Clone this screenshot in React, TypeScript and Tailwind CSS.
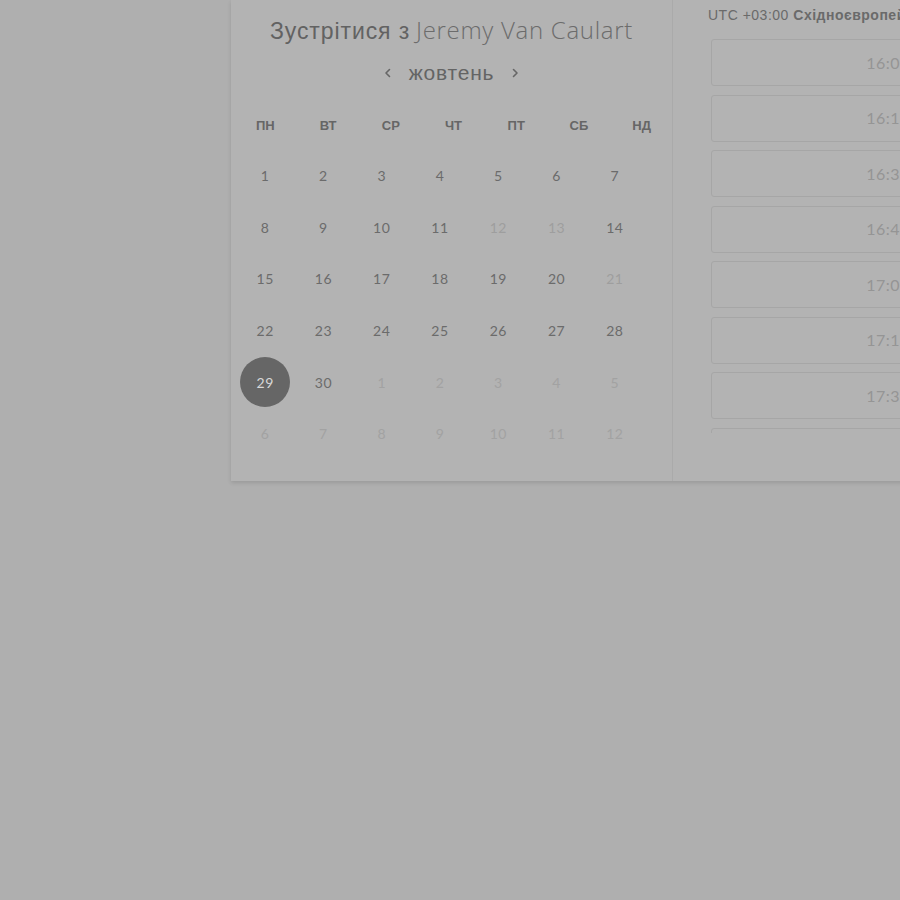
const WEEKDAYS = ['ПН', 'ВТ', 'СР', 'ЧТ', 'ПТ', 'СБ', 'НД']

type Day = { n: number; muted?: boolean; faded?: boolean; selected?: boolean }

const DAYS: Day[] = [
  ...[1, 2, 3, 4, 5, 6, 7].map((n) => ({ n })),
  { n: 8 }, { n: 9 }, { n: 10 }, { n: 11 }, { n: 12, muted: true }, { n: 13, muted: true }, { n: 14 },
  { n: 15 }, { n: 16 }, { n: 17 }, { n: 18 }, { n: 19 }, { n: 20 }, { n: 21, muted: true },
  ...[22, 23, 24, 25, 26, 27, 28].map((n) => ({ n })),
  { n: 29, selected: true }, { n: 30 },
  ...[1, 2, 3, 4, 5].map((n) => ({ n, faded: true })),
  ...[6, 7, 8, 9, 10, 11, 12].map((n) => ({ n, faded: true })),
]

const SLOTS = ['16:00', '16:15', '16:30', '16:45', '17:00', '17:15', '17:30', '17:45']

const FONT = { fontFamily: "Lato, 'Liberation Sans', sans-serif" }

function Chevron({ dir }: { dir: 'left' | 'right' }) {
  return (
    <svg width="8" height="10" viewBox="0 0 8 10" fill="none">
      <path
        d={dir === 'left' ? 'M5.5 1.5 2 5l3.5 3.5' : 'M2.5 1.5 6 5 2.5 8.5'}
        stroke="#666"
        strokeWidth="1.6"
        strokeLinecap="round"
        strokeLinejoin="round"
      />
    </svg>
  )
}

export default function App() {
  return (
    <div className="w-[900px] h-[900px] overflow-hidden bg-[#afafaf]" style={FONT}>
      <div className="ml-[231px] w-[900px] h-[481px] flex bg-[#b3b3b3] shadow-[0_2px_4px_rgba(0,0,0,0.12)]">
        {/* calendar */}
        <div className="w-[441px] shrink-0 pt-[15px] flex flex-col">
          <div className="h-[30px] leading-[30px] text-center text-[23px] text-[#626262] whitespace-nowrap">
            <span className="font-['Liberation_Sans',sans-serif] tracking-[0.9px]">Зустрітися з</span>{' '}
            <span className="font-['Open_Sans',sans-serif] font-light text-[#6c6c6c] text-[24px] tracking-[0.7px]">Jeremy Van Caulart</span>
          </div>

          <div className="mt-[15px] h-[26px] flex items-center justify-center gap-[17px]">
            <Chevron dir="left" />
            <span className="text-[21px] text-[#646464] font-['Liberation_Sans',sans-serif] tracking-[0.8px]">жовтень</span>
            <Chevron dir="right" />
          </div>

          <div className="mt-[30px] ml-[3px] w-[439px] h-[20px] grid grid-cols-7 items-center">
            {WEEKDAYS.map((d) => (
              <div
                key={d}
                className="text-center text-[13px] font-bold text-[#666] font-['Liberation_Sans',sans-serif]"
              >
                {d}
              </div>
            ))}
          </div>

          <div className="mt-[14px] ml-[5px] w-[408px] grid grid-cols-7 auto-rows-[51.6px]">
            {DAYS.map((d, i) => (
              <div key={i} className="flex items-center justify-center">
                {d.selected ? (
                  <div className="w-[50px] h-[50px] rounded-full bg-[#666] flex items-center justify-center text-[14px] text-[#d8d8d8] tracking-[0.5px]">
                    {d.n}
                  </div>
                ) : (
                  <span
                    className={
                      'text-[14px] tracking-[0.5px] ' +
                      (d.faded ? 'text-[#a2a2a2]' : d.muted ? 'text-[#9e9e9e]' : 'text-[#6b6b6b]')
                    }
                  >
                    {d.n}
                  </span>
                )}
              </div>
            ))}
          </div>
        </div>

        {/* time slots */}
        <div className="flex-1 border-l border-[#aaaaaa] pl-[38px] flex flex-col">
          <div className="h-[30px] leading-[30px] -ml-[3px] text-[14px] tracking-[0.5px] text-[#6a6a6a] whitespace-nowrap font-['Liberation_Sans',sans-serif]">
            UTC +03:00 <span className="font-bold">Східноєвропейський час</span>
          </div>
          <div className="mt-[9px] h-[394px] overflow-hidden flex flex-col gap-[8.5px]">
            {SLOTS.map((t) => (
              <div
                key={t}
                className="w-[354px] h-[47px] shrink-0 rounded-[3px] border border-[#a6a6a6] flex items-center justify-center text-[16px] text-[#959595] tracking-[0.5px]"
              >
                {t}
              </div>
            ))}
          </div>
        </div>
      </div>
    </div>
  )
}
